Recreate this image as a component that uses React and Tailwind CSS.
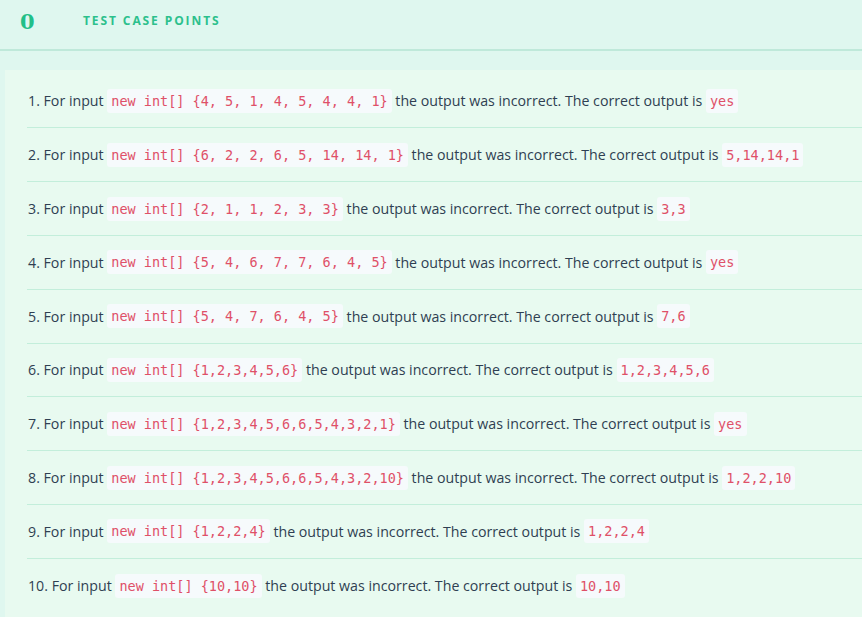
import React from "react";

const cases = [
  { input: "{4, 5, 1, 4, 5, 4, 4, 1}", output: "yes" },
  { input: "{6, 2, 2, 6, 5, 14, 14, 1}", output: "5,14,14,1" },
  { input: "{2, 1, 1, 2, 3, 3}", output: "3,3" },
  { input: "{5, 4, 6, 7, 7, 6, 4, 5}", output: "yes" },
  { input: "{5, 4, 7, 6, 4, 5}", output: "7,6" },
  { input: "{1,2,3,4,5,6}", output: "1,2,3,4,5,6" },
  { input: "{1,2,3,4,5,6,6,5,4,3,2,1}", output: "yes" },
  { input: "{1,2,3,4,5,6,6,5,4,3,2,10}", output: "1,2,2,10" },
  { input: "{1,2,2,4}", output: "1,2,2,4" },
  { input: "{10,10}", output: "10,10" },
];

function Code({ children }) {
  return (
    <code className="rounded-[3px] bg-[#f6fafc] px-1 font-['DejaVu_Sans_Mono',monospace] text-[13.5px] leading-[24px] text-[#df5068]">
      {children}
    </code>
  );
}

export default function App() {
  return (
    <div className="min-h-screen overflow-hidden bg-[#dff7ef] font-['Open_Sans',sans-serif] text-[#2f3f52]">
      {/* score header */}
      <div className="flex h-[51px] items-center border-b-2 border-[#bfe9da] pb-[7px]">
        <span className="ml-[20px] w-[63px] font-['DejaVu_Serif',serif] text-[21px] font-bold leading-none text-[#22bf88]">
          0
        </span>
        <span className="text-[12px] font-bold tracking-[1.9px] text-[#2cc08c]">
          TEST CASE POINTS
        </span>
      </div>

      <div className="ml-[5px] mt-[19px] min-h-[547px] bg-[#e8faf0] pl-[22px] pt-[4.6px]">
        {cases.map((c, i) => (
          <div
            key={i}
            className={
              "flex h-[53.8px] items-center whitespace-pre text-[14.2px] " +
              (i < cases.length - 1 ? "border-b border-[#c3eedb]" : "")
            }
          >
            <span className="pl-[1px]">{i + 1}. For input </span>
            <Code>new int[] {c.input}</Code>
            <span> the output was incorrect. The correct output is </span>
            <Code>{c.output}</Code>
          </div>
        ))}
      </div>
    </div>
  );
}
